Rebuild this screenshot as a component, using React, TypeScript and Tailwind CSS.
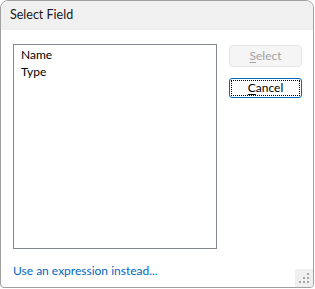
import { useState } from 'react';

const font = { fontFamily: 'Lato, "Noto Sans", Arial, sans-serif' };

function SizeGrip() {
  return (
    <svg width="10" height="10" viewBox="0 0 10 10" className="text-[#a6a6a6]">
      <rect x="8" y="0" width="2" height="2" fill="currentColor" />
      <rect x="4" y="4" width="2" height="2" fill="currentColor" />
      <rect x="8" y="4" width="2" height="2" fill="currentColor" />
      <rect x="0" y="8" width="2" height="2" fill="currentColor" />
      <rect x="4" y="8" width="2" height="2" fill="currentColor" />
      <rect x="8" y="8" width="2" height="2" fill="currentColor" />
    </svg>
  );
}

export default function App() {
  const [fields] = useState(['Name', 'Type']);

  return (
    <div className="w-[315px] h-[289px] bg-white" style={font}>
      <div className="relative w-[314px] h-[288px] flex flex-col border border-[#a0a0a0] rounded-t-[8px] rounded-b-[4px] overflow-hidden bg-white text-[12px] text-black">
        {/* Title bar */}
        <div className="h-[29px] shrink-0 bg-[#f0f0f0] flex items-center pl-[9px]">
          <span className="text-[12.5px] text-[#1a1a1a]">Select Field</span>
        </div>

        {/* Body */}
        <div className="flex flex-1 pl-[12px] pt-[14px]">
          <div className="w-[204px] h-[205px] border border-[#828790] pl-[7px] pt-[1px] leading-[17px]">
            {fields.map(f => (
              <div key={f}>{f}</div>
            ))}
          </div>
          <div className="flex flex-col ml-[12px] pt-[1px] gap-[11px]">
            <button
              disabled
              className="w-[73px] h-[22px] rounded-[4px] border border-[#e5e5e5] bg-[#f5f5f5] text-[#a2a2a2] leading-none"
            >
              <span className="underline underline-offset-2">S</span>elect
            </button>
            <button className="w-[73px] h-[20px] rounded-[3px] border border-[#0067c0] bg-white p-[1px]">
              <div className="w-full h-full border border-dotted border-black flex items-center justify-center leading-none">
                <span className="underline underline-offset-2">C</span>ancel
              </div>
            </button>
          </div>
        </div>

        {/* Footer */}
        <div className="h-[38px] shrink-0 flex items-end justify-between pl-[12px] pb-[10px]">
          <a className="text-[#0067c0] leading-none cursor-pointer">Use an expression instead...</a>
        </div>

        <div className="absolute right-0 bottom-0 w-[18px] h-[18px] bg-[#f0f0f0] flex items-center justify-center">
          <SizeGrip />
        </div>
      </div>
    </div>
  );
}
